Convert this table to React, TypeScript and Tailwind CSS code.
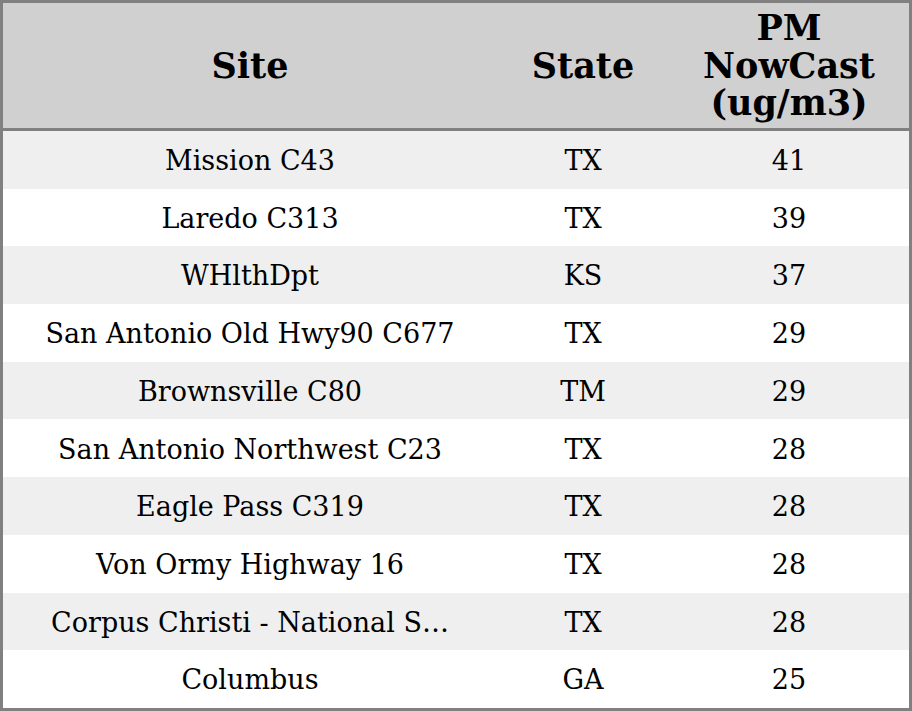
const rows = [
  { site: 'Mission C43', state: 'TX', pm: 41 },
  { site: 'Laredo C313', state: 'TX', pm: 39 },
  { site: 'WHlthDpt', state: 'KS', pm: 37 },
  { site: 'San Antonio Old Hwy90 C677', state: 'TX', pm: 29 },
  { site: 'Brownsville C80', state: 'TM', pm: 29 },
  { site: 'San Antonio Northwest C23', state: 'TX', pm: 28 },
  { site: 'Eagle Pass C319', state: 'TX', pm: 28 },
  { site: 'Von Ormy Highway 16', state: 'TX', pm: 28 },
  { site: 'Corpus Christi - National Seashore', state: 'TX', pm: 28 },
  { site: 'Columbus', state: 'GA', pm: 25 },
];

// long site names get clipped to 27 chars
const shortName = (s: string) => (s.length > 27 ? s.slice(0, 27) + '…' : s);

export default function App() {
  return (
    <div className="w-[912px] h-[711px] border-[3px] border-[#808080] bg-white text-black font-['DejaVu_Serif',serif] flex flex-col">
      {/* header */}
      <div className="h-[125px] bg-[#d0d0d0] border-b-[3px] border-[#808080] box-content grid grid-cols-[494px_172px_240px] items-center text-center font-bold text-[35px] leading-[37.5px]">
        <div>Site</div>
        <div>State</div>
        <div>
          PM
          <br />
          NowCast
          <br />
          (ug/m3)
        </div>
      </div>

      {rows.map((r, i) => (
        <div
          key={r.site}
          className={`h-[57.7px] pt-[3px] grid grid-cols-[494px_172px_240px] items-center text-center text-[27px] ${
            i % 2 === 0 ? 'bg-[#efefef]' : 'bg-white'
          }`}
        >
          <div className="whitespace-nowrap">{shortName(r.site)}</div>
          <div>{r.state}</div>
          <div>{r.pm}</div>
        </div>
      ))}
    </div>
  );
}
